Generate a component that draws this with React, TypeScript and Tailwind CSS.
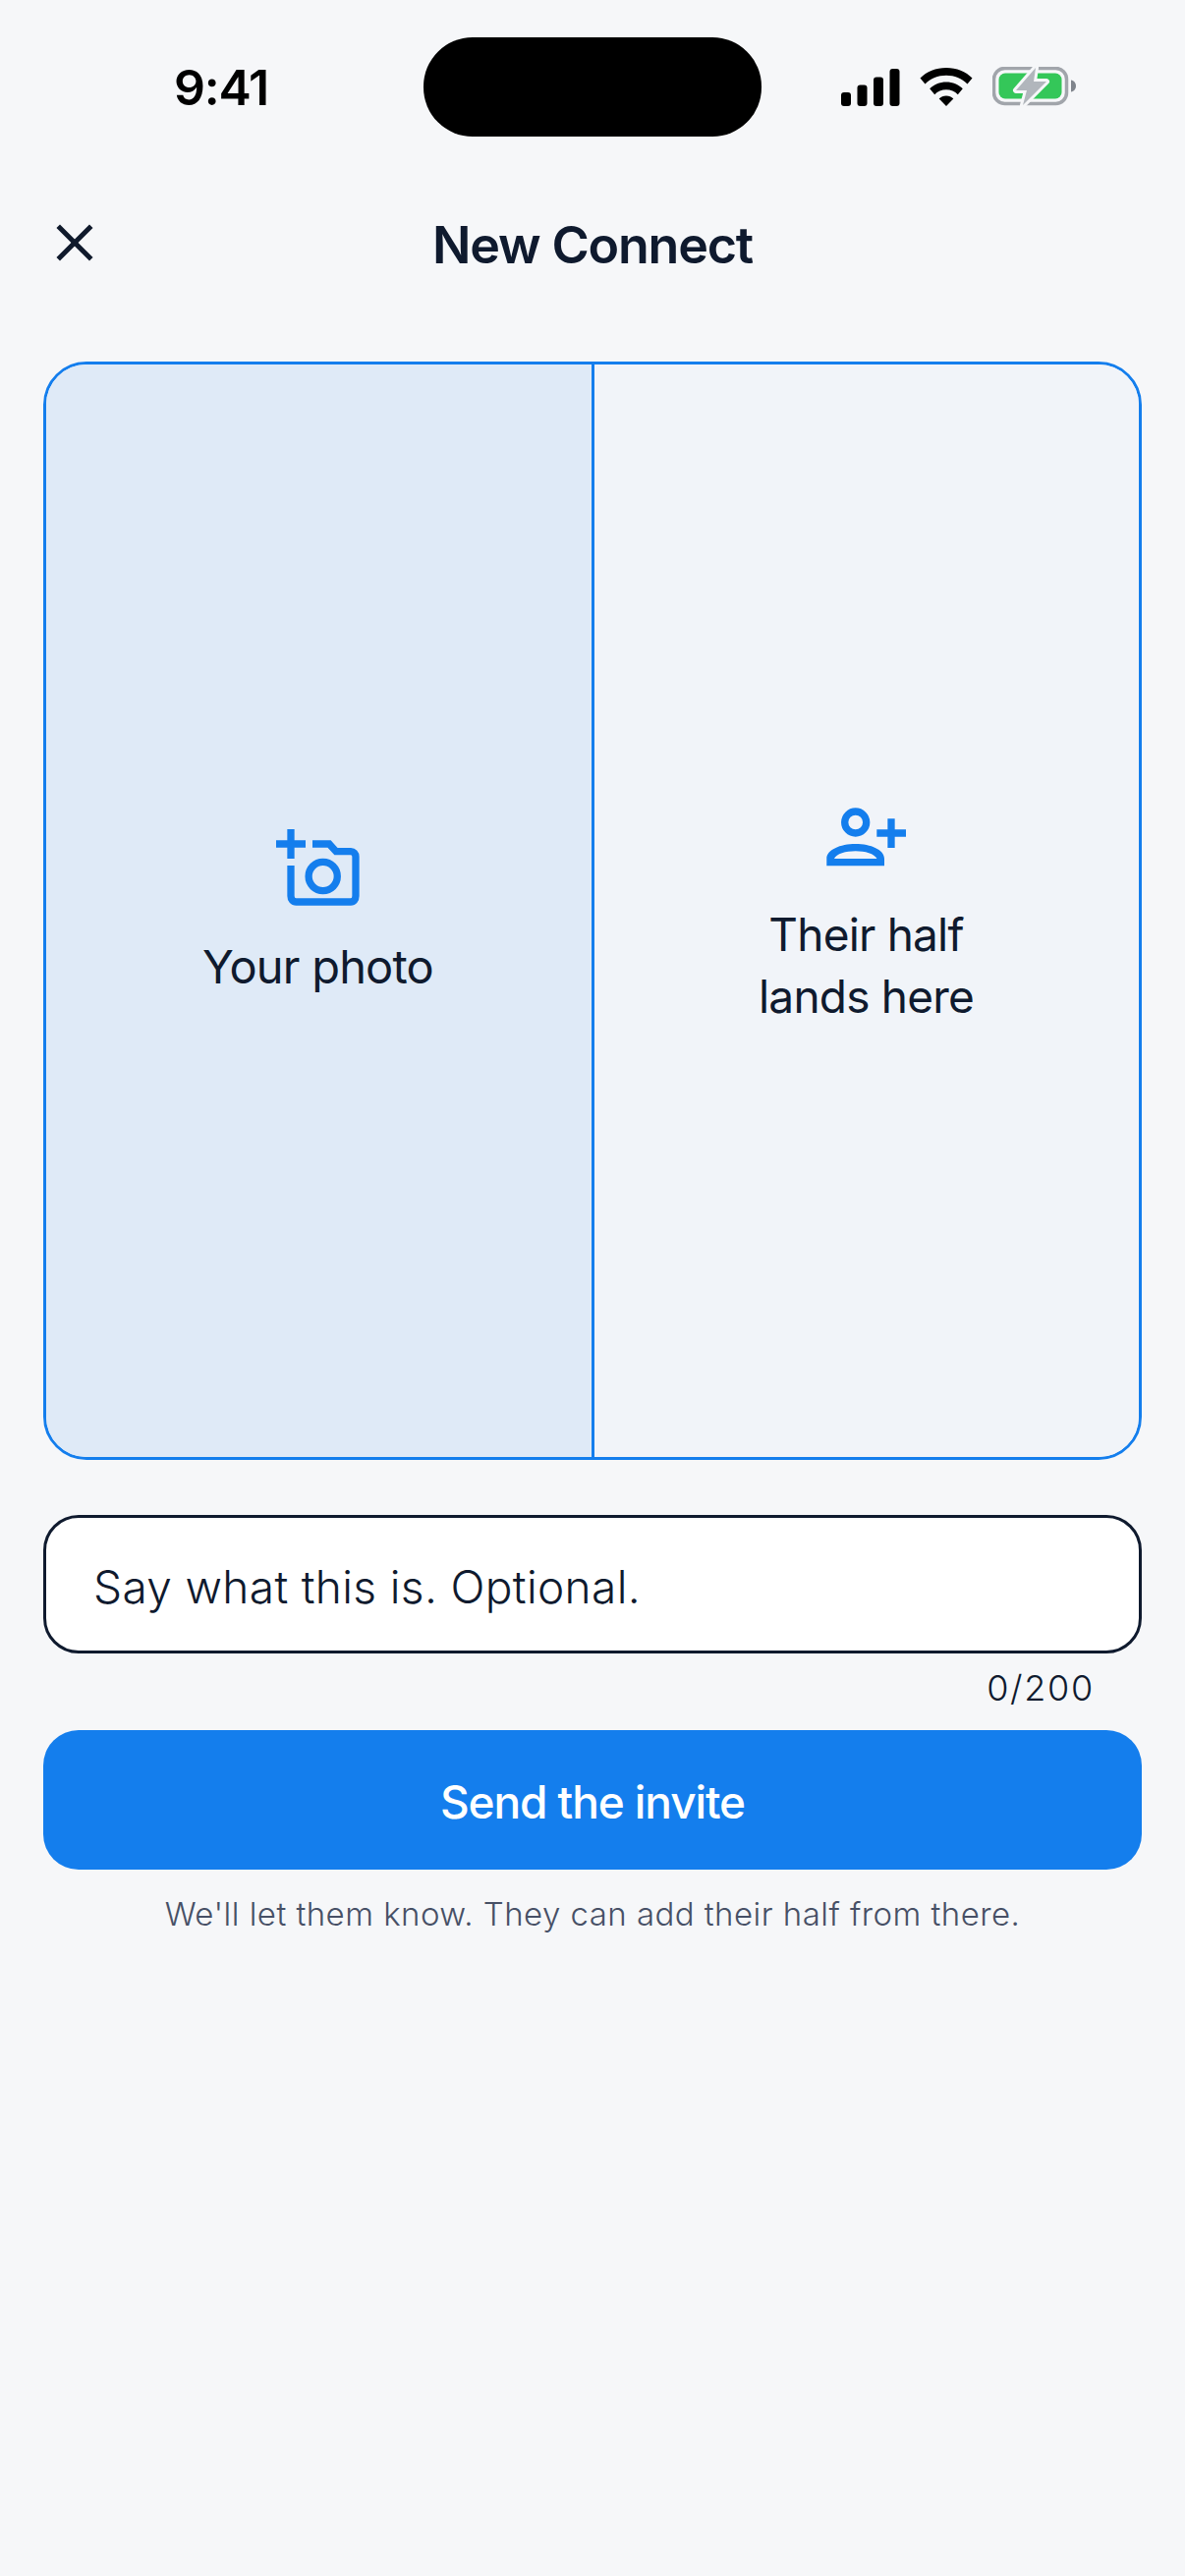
import { X } from "lucide-react"

const FONT = "font-['Inter','Noto_Sans',sans-serif]"

// Status bar glyphs, drawn at the size they sit in the bar
function Signal() {
  return (
    <svg width="60" height="38" viewBox="0 0 60 38" fill="#000">
      <rect x="0" y="24" width="10" height="14" rx="3" />
      <rect x="16.5" y="16.5" width="10" height="21.5" rx="3" />
      <rect x="33" y="8.5" width="10" height="29.5" rx="3" />
      <rect x="49.5" y="0" width="10" height="38" rx="3" />
    </svg>
  )
}

function Wifi() {
  return (
    <svg width="54" height="39" viewBox="0 0 54 39" fill="#000">
      <path d="M27 0C37.5 0 47 4 53.5 10.5L48.5 16.5C43 11 35.5 7.8 27 7.8S11 11 5.5 16.5L.5 10.5C7 4 16.5 0 27 0Z" />
      <path d="M27 14.5C33.6 14.5 39.5 17 43.8 21.3L38.8 27.2C35.7 24.2 31.6 22.3 27 22.3S18.3 24.2 15.2 27.2L10.2 21.3C14.5 17 20.4 14.5 27 14.5Z" />
      <path d="M27 28.6C29.9 28.6 32.4 29.7 34.3 31.5L27 39 19.7 31.5C21.6 29.7 24.1 28.6 27 28.6Z" />
    </svg>
  )
}

function Battery() {
  const bolt = "M44 1L24 24H35L31 39 55 15H42Z"
  return (
    <svg width="86" height="40" viewBox="0 0 86 40">
      <rect x="1.5" y="1.5" width="74" height="36" rx="11" fill="none" stroke="#a1a5ab" strokeWidth="3.5" />
      <rect x="6.5" y="6.5" width="64" height="26" rx="6.5" fill="#34c759" />
      <path d={bolt} fill="none" stroke="#f6f7f9" strokeWidth="6" strokeLinejoin="round" />
      <path d={bolt} fill="#b1b6bc" />
      <path d="M80 13.5C83 14 85 16.5 85 19.5S83 25 80 25.5Z" fill="#7f848c" />
    </svg>
  )
}

function AddPhotoIcon() {
  return (
    <svg width="85" height="78" viewBox="0 0 85 78" fill="none" stroke="#147eed" strokeWidth="7.3">
      <path d="M0 15H30M15 0V30" />
      <path d="M15 37V68C15 71.500 17 74 20.500 74H76C79 74 81 71.500 81 68V28C81 25 79 22.700 76 22.700H61L54 15H37" />
      <circle cx="47.700" cy="48" r="14.600" />
    </svg>
  )
}

function AddPersonIcon() {
  return (
    <svg width="82" height="60" viewBox="0 0 82 60" fill="none">
      <circle cx="29.700" cy="15" r="11" stroke="#147eed" strokeWidth="7.300" />
      <path
        fillRule="evenodd"
        fill="#147eed"
        d="M.3 59.300V52C.3 43 14 37 29.700 37S59 43 59 52V59.300ZM8 52C10 47 20 44.300 29.700 44.300S49 47 51.500 52Z"
      />
      <path d="M51.300 26H81M66 11.300V41" stroke="#147eed" strokeWidth="7.300" />
    </svg>
  )
}

export default function App() {
  return (
    <div className={`${FONT} flex min-h-[2622px] w-[1206px] flex-col bg-[#f6f7f9] text-[#0f1a2e]`}>
      {/* Status bar */}
      <div className="flex h-[139px] items-start pt-[38px]">
        <div className="ml-[177px] mt-[22px] w-[98px] text-[50px] font-semibold leading-[58px] tracking-[-1.2px] text-black">9:41</div>
        <div className="ml-[156px] h-[101px] w-[344px] rounded-[50px] bg-black" />
        <div className="ml-[81px] mt-[30px] flex items-end">
          <Signal />
          <div className="ml-[20px]"><Wifi /></div>
          <div className="ml-[20px]"><Battery /></div>
        </div>
      </div>

      {/* Header */}
      <div className="relative mt-[81px] flex h-[60px] items-center justify-center">
        <button className="absolute left-[46px] top-[-3px] text-[#101a2c]" aria-label="Close">
          <X size={60} strokeWidth={2} strokeLinecap="square" />
        </button>
        <h1 className="text-[52px] font-semibold leading-[60px] tracking-[-1.2px]">New Connect</h1>
      </div>

      <div className="mt-[88px] flex flex-col px-[44px]">
        {/* Two-half photo card */}
        <div className="flex h-[1118px] overflow-hidden rounded-[44px] border-[3px] border-[#147eed]">
          <button className="flex w-[558px] shrink-0 flex-col items-center justify-center border-r-[3px] border-[#147eed] bg-[#dfeaf7] pr-[2px] pt-[4px]">
            <AddPhotoIcon />
            <span className="mt-[30px] text-[47px] font-normal leading-[63px] tracking-[-0.8px]">Your photo</span>
          </button>
          <div className="flex flex-1 flex-col items-center justify-center bg-[#f1f4f9] pr-[1px] pt-[14px]">
            <AddPersonIcon />
            <p className="mt-[38px] text-center text-[46px] font-normal leading-[63px] tracking-[-0.8px]">
              Their half
              <br />
              lands here
            </p>
          </div>
        </div>

        {/* Caption field */}
        <div className="mt-[56px] flex h-[141px] items-center rounded-[36px] border-[3px] border-[#0f1a2e] bg-white pl-[48px] pt-[6px] text-[46px] font-light tracking-[0.35px]">
          Say what this is. Optional.
        </div>
        <div className="mt-[17px] h-[36px] pr-[48px] text-right text-[36px] font-light leading-[36px] tracking-[1.7px]">0/200</div>

        <button className="mt-[25px] h-[142px] rounded-[36px] bg-[#147eed] pt-[5px] text-[46px] font-medium tracking-[-1.1px] text-white">
          Send the invite
        </button>
        <p className="mt-[24px] text-center text-[33px] font-light leading-[42px] tracking-[0.45px] text-[#475066]">
          We'll let them know. They can add their half from there.
        </p>
      </div>
    </div>
  )
}
